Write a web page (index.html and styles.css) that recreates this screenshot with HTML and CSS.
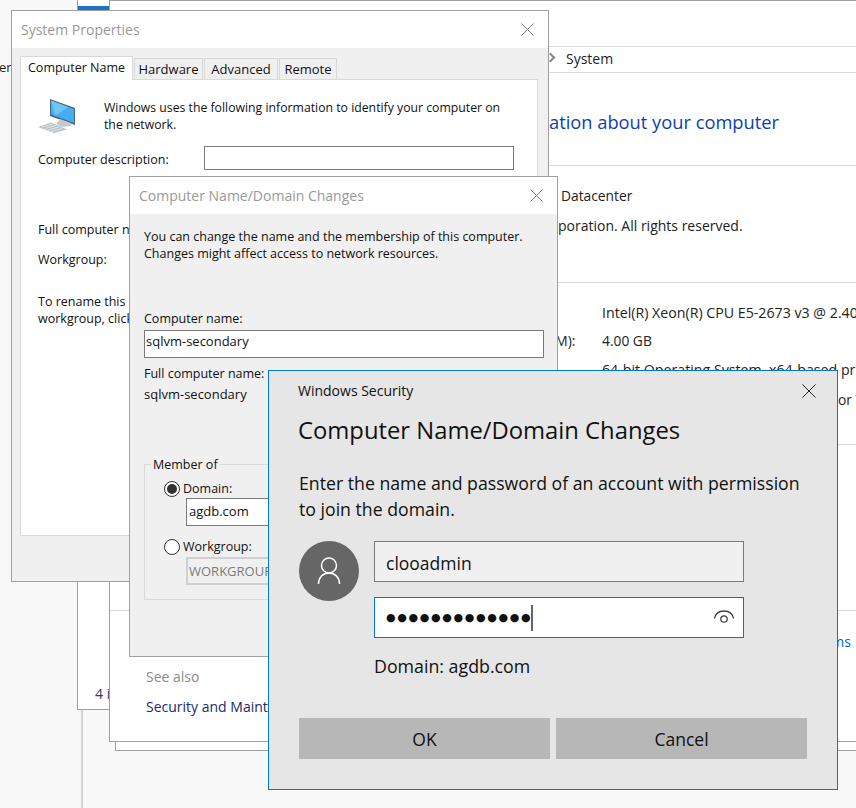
FILE: index.html
```html
<!DOCTYPE html>
<html lang="en">
<head>
    <meta charset="UTF-8">
    <meta name="viewport" content="width=device-width, initial-scale=1.0">
    <title>Computer Name/Domain Changes</title>
    <link rel="stylesheet" href="styles.css">
</head>
<body>
    <div class="desktop">
        <div class="stray">er</div>
        <div class="rail"></div>

        <!-- windows behind the dialogs -->
        <div class="win win-far"></div>
        <div class="win win-left">
            <div class="accent"></div>
            <div class="left-count">4 items</div>
        </div>
        <div class="win win-system">
            <div class="crumbs"><span class="chevron"></span><span class="crumb-text">System</span></div>
            <div class="sys-heading">ation about your computer</div>
            <div class="rule rule-a"></div>
            <div class="sys-line sys-edition">Datacenter</div>
            <div class="sys-line sys-copy">poration. All rights reserved.</div>
            <div class="rule rule-b"></div>
            <div class="sys-line sys-wide sys-cpu">Intel(R) Xeon(R) CPU E5-2673 v3 @ 2.40GHz</div>
            <div class="sys-line sys-ram-label">Installed memory (RAM):</div>
            <div class="sys-line sys-ram">4.00 GB</div>
            <div class="sys-line sys-wide sys-type">64-bit Operating System, x64-based processor</div>
            <div class="sys-line sys-pen">or Touch Input</div>
            <div class="rule rule-c"></div>
            <div class="rule rule-d"></div>
            <div class="sys-link">Read the Microsoft Software License Terms</div>
            <div class="see-also">See also</div>
            <div class="see-link">Security and Maintenance</div>
        </div>

        <!-- System Properties -->
        <div class="win dialog win-props">
            <div class="titlebar">
                <span class="title">System Properties</span>
                <svg class="close" viewBox="0 0 14 14"><path d="M0.5 0.5L13.5 13.5M13.5 0.5L0.5 13.5"/></svg>
            </div>
            <div class="dialog-body">
                <div class="tabs">
                    <div class="tab tab-on">Computer Name</div>
                    <div class="tab tab-hw">Hardware</div>
                    <div class="tab tab-adv">Advanced</div>
                    <div class="tab tab-rem">Remote</div>
                </div>
                <div class="tab-panel">
                    <div class="intro">
                        <svg class="pc-icon" width="38" height="36" viewBox="0 0 38 36">
                            <polygon points="12,1 37,10 37,27 12,18" fill="#4a6274"/>
                            <polygon points="13,2.5 36,11 36,25 13,16.5" fill="#45aef2"/>
                            <polygon points="13,2.5 30,9 17,18" fill="#6cc4f7"/>
                            <polygon points="22,21 33,25 33,28 24,29 18,26" fill="#c3c9cc"/>
                            <polygon points="0,29 13,24.500 29,31.500 16,35" fill="#bcc2c5"/>
                            <path d="M4 29L15 26M7 30.500L18 27.500M10 32L21 29M13 33.500L24 30.500" stroke="#eef0f1" stroke-width="0.8"/>
                        </svg>
                        <p class="intro-text">Windows uses the following information to identify your computer on the network.</p>
                    </div>
                    <div class="desc-row">
                        <span>Computer description:</span>
                        <div class="field desc-field"></div>
                    </div>
                    <div class="props-line props-full">Full computer name:</div>
                    <div class="props-line props-group">Workgroup:</div>
                    <p class="props-line props-rename">To rename this computer<br>workgroup, click</p>
                </div>
            </div>
        </div>

        <!-- Computer Name/Domain Changes -->
        <div class="win dialog win-name">
            <div class="titlebar">
                <span class="title">Computer Name/Domain Changes</span>
                <svg class="close" viewBox="0 0 14 14"><path d="M0.5 0.5L13.5 13.5M13.5 0.5L0.5 13.5"/></svg>
            </div>
            <div class="dialog-body name-body">
                <p class="name-intro">You can change the name and the membership of this computer. Changes might affect access to network resources.</p>
                <div class="name-label">Computer name:</div>
                <div class="field name-field">sqlvm-secondary</div>
                <div class="full-label">Full computer name:</div>
                <div class="full-value">sqlvm-secondary</div>
                <fieldset class="member">
                    <legend>Member of</legend>
                    <div class="radio-row"><span class="radio radio-on"></span>Domain:</div>
                    <div class="field member-field">agdb.com</div>
                    <div class="radio-row radio-row-2"><span class="radio"></span>Workgroup:</div>
                    <div class="field member-field field-off">WORKGROUP</div>
                </fieldset>
            </div>
        </div>

        <!-- Windows Security -->
        <div class="win security">
            <div class="sec-top">
                <span class="sec-app">Windows Security</span>
                <svg class="sec-close" viewBox="0 0 14 14"><path d="M0.5 0.5L13.5 13.5M13.5 0.5L0.5 13.5"/></svg>
            </div>
            <h1 class="sec-title">Computer Name/Domain Changes</h1>
            <p class="sec-text">Enter the name and password of an account with permission to join the domain.</p>
            <div class="cred">
                <div class="avatar">
                    <svg width="26" height="28" viewBox="0 0 26 28"><circle cx="13" cy="8.500" r="7.500"/><path d="M2.500 27C2.500 20.500 7 16 13 16C19 16 23.500 20.500 23.500 27"/></svg>
                </div>
                <div class="cred-fields">
                    <div class="sec-input sec-input-user">clooadmin</div>
                    <div class="sec-input sec-input-on">
                        <span class="dots">●●●●●●●●●●●●●</span><span class="caret"></span>
                        <svg class="eye" width="22" height="16" viewBox="0 0 22 16"><path d="M1.500 9.500C2.500 4.500 6.500 2 11 2C15.500 2 19.500 4.500 20.500 9.500"/><circle cx="11" cy="10" r="3.200"/></svg>
                    </div>
                    <div class="sec-domain">Domain: agdb.com</div>
                </div>
            </div>
            <div class="sec-buttons">
                <button class="sec-btn">OK</button>
                <button class="sec-btn">Cancel</button>
            </div>
        </div>
    </div>
</body>
</html>
```

FILE: styles.css
```css
html, body {
    margin: 0;
    padding: 0;
}
.desktop {
    position: relative;
    width: 856px;
    height: 808px;
    overflow: hidden;
    background-color: #f8f8f8;
    font-family: "Open Sans", "Noto Sans", sans-serif;
    color: #000;
}
p {
    margin: 0;
}
.win {
    position: absolute;
    box-sizing: border-box;
    border: 1px solid #a0a0a0;
    background-color: #fff;
    overflow: hidden;
}

/* things behind everything */
.stray {
    position: absolute;
    left: -1px;
    top: 58px;
    font-size: 13px;
    color: #222;
}
.rail {
    position: absolute;
    left: 81px;
    top: 700px;
    width: 2px;
    height: 108px;
    background-color: #d2d2d2;
}
.win-far {
    left: 115px;
    top: -1px;
    width: 800px;
    height: 752px;
}
.win-left {
    left: 77px;
    top: -6px;
    width: 300px;
    height: 716px;
}
.accent {
    width: 31px;
    height: 4px;
    margin-top: 11px;
    background-color: #1a73c4;
}
.left-count {
    position: absolute;
    left: 17px;
    top: 689px;
    font-size: 14px;
    color: #2a3a6a;
}
.win-system {
    left: 109px;
    top: 0;
    width: 800px;
    height: 742px;
}

/* system page text, each line sits on the page behind the dialogs */
.crumbs {
    position: absolute;
    left: 0;
    right: 0;
    top: 45px;
    height: 25px;
    border-top: 1px solid #d9d9d9;
    border-bottom: 1px solid #d9d9d9;
    display: flex;
    align-items: center;
}
.chevron {
    position: absolute;
    left: 437px;
    top: 7px;
    width: 5px;
    height: 5px;
    border-top: 2px solid #8a8a8a;
    border-right: 2px solid #8a8a8a;
    transform: rotate(45deg);
}
.crumb-text {
    position: absolute;
    left: 456px;
    top: 2px;
    font-size: 14px;
    color: #222;
}
.sys-heading {
    position: absolute;
    left: 439px;
    top: 108px;
    font-size: 18.300px;
    color: #0a3fb0;
    white-space: nowrap;
}
.rule {
    position: absolute;
    left: 0;
    right: 0;
    height: 1px;
    background-color: #d9d9d9;
}
.rule-a { top: 164px; }
.rule-b { top: 281px; }
.rule-c { top: 443px; }
.rule-d { top: 609px; }
.sys-line {
    position: absolute;
    font-size: 13.800px;
    color: #222;
    white-space: nowrap;
}
.sys-wide {
    font-size: 14.200px;
}
.sys-edition { left: 451px; top: 185px; }
.sys-copy { left: 448px; top: 215px; font-size: 14px; }
.sys-cpu { left: 492px; top: 302px; }
.sys-ram-label { left: 308px; top: 330px; }
.sys-ram { left: 492px; top: 330px; }
.sys-type { left: 492px; top: 359px; }
.sys-pen { left: 728px; top: 389px; }
.sys-link {
    position: absolute;
    right: 57px;
    top: 631px;
    font-size: 14px;
    color: #0066cc;
    white-space: nowrap;
}
.see-also {
    position: absolute;
    left: 36px;
    top: 666px;
    font-size: 14px;
    color: #8a8a8a;
}
.see-link {
    position: absolute;
    left: 36px;
    top: 696px;
    font-size: 14px;
    color: #1a2a6a;
    white-space: nowrap;
}

/* dialog chrome */
.dialog {
    background-color: #f0f0f0;
}
.titlebar {
    position: relative;
    height: 37px;
    background-color: #fff;
    display: flex;
    align-items: center;
    padding-left: 9px;
}
.title {
    font-size: 14px;
    color: #999;
}
.close {
    position: absolute;
    right: 14px;
    top: 12px;
    width: 13px;
    height: 13px;
    fill: none;
    stroke: #777;
    stroke-width: 1;
}

/* System Properties */
.win-props {
    left: 11px;
    top: 10px;
    width: 538px;
    height: 572px;
}
.dialog-body {
    padding: 8px;
}
.tabs {
    display: flex;
    align-items: flex-end;
    height: 23px;
    font-size: 13px;
}
.tab {
    box-sizing: border-box;
    height: 21px;
    line-height: 20px;
    margin-left: 1px;
    border: 1px solid #d9d9d9;
    border-bottom: none;
    text-align: center;
    white-space: nowrap;
    color: #111;
}
.tab-hw { width: 69px; }
.tab-adv { width: 74px; }
.tab-rem { width: 58px; }
.tab-on {
    height: 24px;
    line-height: 22px;
    width: 113px;
    padding: 0 0 0 7px;
    margin-left: 0;
    margin-bottom: -1px;
    text-align: left;
    font-size: 12.500px;
    background-color: #fff;
    position: relative;
    z-index: 1;
}
.tab-panel {
    box-sizing: border-box;
    width: 518px;
    height: 457px;
    background-color: #fff;
    border: 1px solid #d9d9d9;
    padding: 18px 17px;
    font-size: 12.500px;
    color: #111;
}
.intro {
    display: flex;
}
.pc-icon {
    flex: none;
    margin: 0 28px 0 0;
}
.intro-text {
    width: 410px;
    font-size: 12.250px;
    line-height: 17px;
    margin-top: 1px;
}
.desc-row {
    display: flex;
    align-items: center;
    margin-top: 12px;
}
.desc-row span {
    width: 166px;
    padding-top: 3px;
}
.field {
    box-sizing: border-box;
    border: 1px solid #7a7a7a;
    background-color: #fff;
    color: #111;
    white-space: nowrap;
    overflow: hidden;
}
.desc-field {
    width: 310px;
    height: 24px;
}
.props-line {
    line-height: 17px;
}
.props-full {
    margin-top: 51px;
}
.props-group {
    margin-top: 13px;
}
.props-rename {
    margin-top: 25px;
    width: 480px;
}

/* Computer Name/Domain Changes */
.win-name {
    left: 129px;
    top: 176px;
    width: 429px;
    height: 481px;
}
.name-body {
    padding: 14px 13px 0 14px;
    font-size: 12.500px;
    color: #111;
}
.name-intro {
    line-height: 17px;
    width: 395px;
}
.name-label {
    margin-top: 48px;
    line-height: 17px;
}
.name-field {
    width: 400px;
    height: 28px;
    font-size: 13px;
    line-height: 21px;
    padding-left: 1px;
    margin-top: 3px;
}
.full-label {
    margin-top: 7px;
    line-height: 17px;
}
.full-value {
    margin-top: 4px;
    font-size: 13px;
    line-height: 17px;
}
.member {
    box-sizing: border-box;
    width: 400px;
    height: 144px;
    margin: 53px 0 0 0;
    padding: 0;
    border: 1px solid #d9d9d9;
}
.member legend {
    padding: 0 2px;
    margin-left: 6px;
    line-height: 17px;
}
.radio-row {
    display: flex;
    align-items: center;
    height: 17px;
    margin: 7px 0 0 19px;
    gap: 3px;
}
.radio-row-2 {
    margin-top: 12px;
}
.radio {
    box-sizing: border-box;
    width: 16px;
    height: 16px;
    border: 1px solid #333;
    border-radius: 50%;
    background-color: #fff;
    position: relative;
}
.radio-on::after {
    content: "";
    position: absolute;
    left: 2px;
    top: 2px;
    width: 10px;
    height: 10px;
    border-radius: 50%;
    background-color: #333;
}
.member-field {
    width: 200px;
    height: 28px;
    font-size: 13px;
    line-height: 24px;
    padding-left: 2px;
    margin: 1px 0 0 41px;
}
.field-off {
    margin-top: 2px;
    background-color: #f0f0f0;
    border: 2px solid #d0d0d0;
    color: #7a7a7a;
    padding-left: 1px;
}

/* Windows Security */
.security {
    left: 268px;
    top: 370px;
    width: 570px;
    height: 420px;
    background-color: #e6e6e6;
    border: 1px solid #0078d7;
    padding: 0 30px;
    color: #111;
}
.sec-top {
    display: flex;
    align-items: center;
    justify-content: space-between;
    height: 40px;
    margin-left: -1px;
}
.sec-app {
    font-size: 14px;
    margin-top: -2px;
}
.sec-close {
    width: 14px;
    height: 14px;
    fill: none;
    stroke: #222;
    stroke-width: 1;
    margin-right: -9px;
}
.sec-title {
    font-size: 23.800px;
    font-weight: 400;
    line-height: 32px;
    margin: 3px 0 0 -1px;
}
.sec-text {
    font-size: 17.700px;
    line-height: 26px;
    margin-top: 24px;
    width: 510px;
}
.cred {
    display: flex;
    gap: 15px;
    margin-top: 19px;
}
.avatar {
    width: 60px;
    height: 60px;
    border-radius: 50%;
    background-color: #666;
    display: flex;
    align-items: center;
    justify-content: center;
}
.avatar svg {
    fill: none;
    stroke: #fff;
    stroke-width: 1.500;
}
.cred-fields {
    width: 370px;
}
.sec-input {
    box-sizing: border-box;
    height: 41px;
    padding-left: 11px;
    font-size: 17.500px;
    background-color: #f0f0f0;
    border: 1px solid #7a7a7a;
    position: relative;
    display: flex;
    align-items: center;
}
.sec-input-user {
    padding-top: 3px;
}
.sec-input-on {
    margin-top: 15px;
    background-color: #fff;
    border-color: #0078d7;
}
.dots {
    font-family: "DejaVu Sans", sans-serif;
    font-size: 11px;
    letter-spacing: 1.650px;
}
.caret {
    width: 2px;
    height: 26px;
    margin-left: -1px;
    background-color: #666;
}
.eye {
    position: absolute;
    right: 8px;
    top: 11px;
    fill: none;
    stroke: #444;
    stroke-width: 1.300;
}
.sec-domain {
    font-size: 17.800px;
    line-height: 24px;
    margin-top: 16px;
}
.sec-buttons {
    display: flex;
    gap: 6px;
    margin-top: 40px;
}
.sec-btn {
    width: 251px;
    height: 41px;
    border: none;
    background-color: #b7b7b7;
    color: #111;
    font-family: inherit;
    font-size: 17.500px;
    padding: 0;
}
```
